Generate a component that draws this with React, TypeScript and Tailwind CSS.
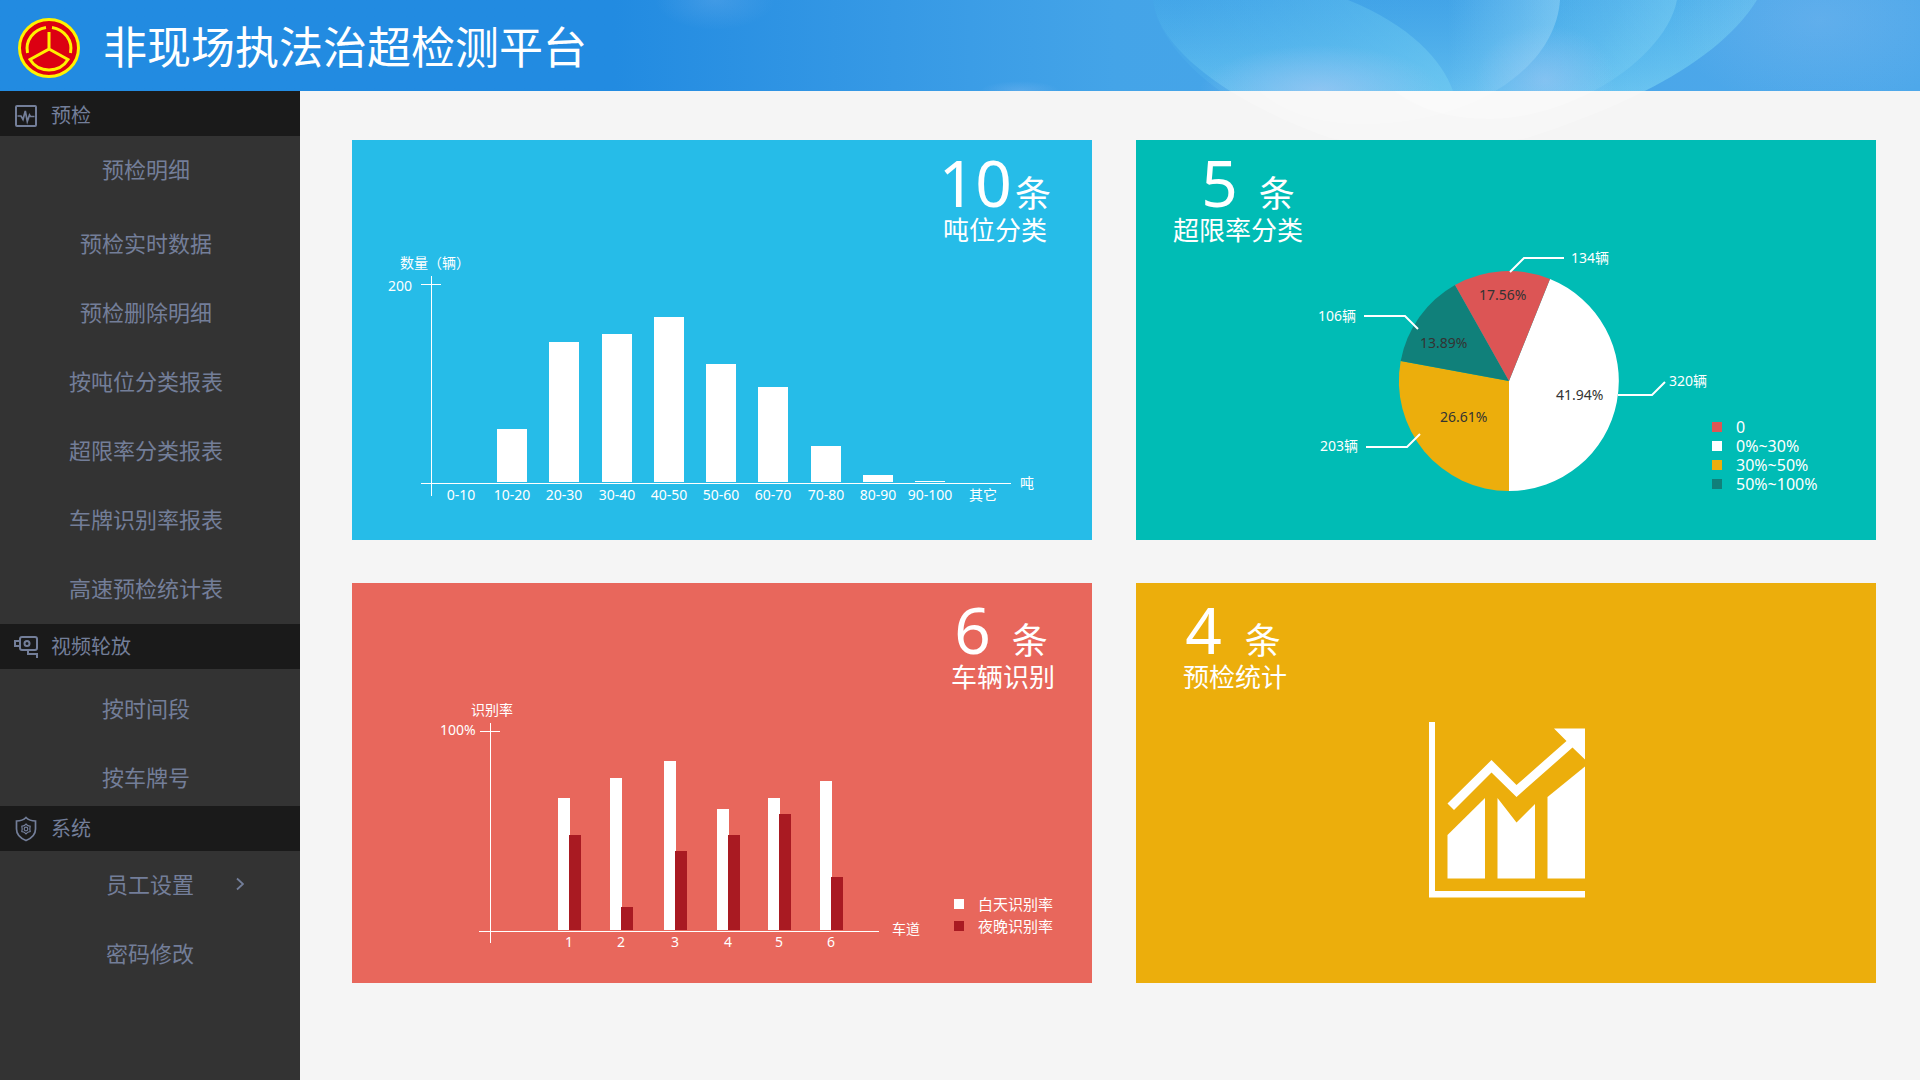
import React from "react";

const INK = "#ffffff";

function Emblem() {
  return (
    <svg viewBox="0 0 62 60" className="h-[60px] w-[62px] shrink-0" fill="none" aria-hidden="true">
      <ellipse cx="31" cy="30" rx="29.5" ry="28.5" fill="#dc0012" stroke="#fff200" strokeWidth="3" />
      <g stroke="#fff200" strokeWidth="3">
        <path d="M9.5 35 A22.5 21.5 0 0 1 28 9.5" />
        <path d="M34 9.5 A22.5 21.5 0 0 1 52.5 35" />
        <path d="M31 14 V31 L12 41.500 A22 21 0 0 0 50 41.500 L31 31" />
      </g>
    </svg>
  );
}

function PulseIcon() {
  return (
    <svg viewBox="0 0 24 24" className="h-6 w-6" fill="none" stroke="currentColor" strokeWidth="2" aria-hidden="true">
      <rect x="2" y="2" width="20" height="20" rx="1" />
      <path d="M3.500 12 H7 L9 15.500 L11.300 7 L13.300 17.500 L15.500 11 L16.500 12.500 H20.500" strokeWidth="1.700" />
    </svg>
  );
}

function CameraIcon() {
  return (
    <svg viewBox="0 0 26 24" className="h-6 w-[26px]" fill="none" stroke="currentColor" strokeWidth="2" aria-hidden="true">
      <rect x="7" y="2" width="17" height="13" rx="2" />
      <path d="M7 6 H2 V11 H7" />
      <circle cx="14" cy="8.500" r="2.500" />
      <path d="M15 15 V19 H24 V23" />
    </svg>
  );
}

function ShieldIcon() {
  return (
    <svg viewBox="0 0 24 26" className="h-[26px] w-6" fill="none" stroke="currentColor" strokeWidth="1.700" aria-hidden="true">
      <path d="M12 1.500 C9.500 4 5.500 5 2.500 5 V13 C2.500 18.500 7 22.500 12 24.500 C17 22.500 21.500 18.500 21.500 13 V5 C18.500 5 14.500 4 12 1.500 Z" />
      <path d="M12 8 L13.800 9.600 L16.200 10.200 L15.800 13 L16.200 15.500 L13.800 16.200 L12 18 L10.200 16.200 L7.800 15.500 L8.200 13 L7.800 10.200 L10.200 9.600 Z" strokeWidth="1.200" />
      <circle cx="12" cy="13" r="1.800" strokeWidth="1.200" />
    </svg>
  );
}

const OUTER = "M533 0 C537 40 590 95 710 138 C770 150 850 150 907 138 C1010 105 1100 60 1137 0 Z";
const INNER_LEFT = "M596 0 C600 50 630 124 743 124 C850 124 935 70 940 0 Z";
const INNER_RIGHT = "M728 0 C735 60 770 119 870 119 C950 119 1045 60 1057 0 Z";

function SkyArt() {
  return (
    <svg
      viewBox="0 0 1300 145"
      preserveAspectRatio="xMaxYMin slice"
      className="pointer-events-none absolute top-0 right-0 h-[145px] w-[1300px]"
      aria-hidden="true"
    >
      <defs>
        <linearGradient id="fall" gradientUnits="userSpaceOnUse" x1="0" y1="0" x2="0" y2="91">
          <stop offset="0" stopColor="#6fd2f4" stopOpacity="0.03" />
          <stop offset="1" stopColor="#8fe0f8" stopOpacity="0.4" />
        </linearGradient>
        <linearGradient id="deep" gradientUnits="userSpaceOnUse" x1="820" y1="0" x2="1050" y2="0">
          <stop offset="0" stopColor="#3a9fe6" stopOpacity="0.5" />
          <stop offset="1" stopColor="#3fb4ea" stopOpacity="0.25" />
        </linearGradient>
        <linearGradient id="petal" gradientUnits="userSpaceOnUse" x1="560" y1="0" x2="830" y2="60">
          <stop offset="0" stopColor="#5fc4f0" stopOpacity="0.1" />
          <stop offset="1" stopColor="#74cff2" stopOpacity="0.5" />
        </linearGradient>
        <linearGradient id="rim" gradientUnits="userSpaceOnUse" x1="1000" y1="0" x2="1130" y2="60">
          <stop offset="0" stopColor="#7fd4f4" stopOpacity="0" />
          <stop offset="1" stopColor="#7fd4f4" stopOpacity="0.4" />
        </linearGradient>
        <linearGradient id="edge" gradientUnits="userSpaceOnUse" x1="780" y1="0" x2="940" y2="0">
          <stop offset="0.3" stopColor="#a5dcf8" stopOpacity="0" />
          <stop offset="1" stopColor="#a5dcf8" stopOpacity="0.45" />
        </linearGradient>
        <linearGradient id="edge2" gradientUnits="userSpaceOnUse" x1="900" y1="0" x2="1060" y2="0">
          <stop offset="0" stopColor="#8fdcf6" stopOpacity="0" />
          <stop offset="1" stopColor="#8fdcf6" stopOpacity="0.35" />
        </linearGradient>
        <radialGradient id="cloud">
          <stop offset="0" stopColor="#a9c8f4" stopOpacity="0.6" />
          <stop offset="1" stopColor="#a9c8f4" stopOpacity="0" />
        </radialGradient>
        <clipPath id="bar">
          <rect width="1300" height="91" />
        </clipPath>
        <clipPath id="below">
          <rect y="91" width="1300" height="54" />
        </clipPath>
      </defs>
      <g clipPath="url(#bar)">
        <path d={OUTER} fill="url(#deep)" />
        <path d={OUTER} fill="url(#fall)" />
        <path d={OUTER} fill="url(#rim)" />
        <path d={INNER_RIGHT} fill="url(#edge2)" />
        <ellipse cx="925" cy="80" rx="70" ry="55" fill="url(#cloud)" opacity="0.8" />
        <path d={INNER_LEFT} fill="url(#edge)" />
        <path d="M533 0 C537 30 560 62 600 91 H833 C822 60 790 25 728 0 Z" fill="url(#petal)" />
        <ellipse cx="700" cy="90" rx="120" ry="45" fill="url(#cloud)" />
        <ellipse cx="1200" cy="20" rx="150" ry="90" fill="url(#cloud)" opacity="0.35" />
        <ellipse cx="95" cy="0" rx="60" ry="30" fill="url(#cloud)" opacity="0.3" />
        <ellipse cx="400" cy="91" rx="40" ry="10" fill="url(#cloud)" opacity="0.4" />
      </g>
      <g clipPath="url(#below)" fill="#ffffff">
        <path d={OUTER} opacity="0.25" />
        <path d={INNER_LEFT} opacity="0.2" />
        <path d={INNER_RIGHT} opacity="0.25" />
      </g>
    </svg>
  );
}

type Section = {
  title: string;
  icon: React.ReactNode;
  head: string;
  body: string;
  items: { label: string; className: string; more?: boolean }[];
};

const sections: Section[] = [
  {
    title: "预检",
    icon: <PulseIcon />,
    head: "pt-1",
    body: "pt-[5px] pb-2",
    items: [
      { label: "预检明细", className: "mb-[5px] pr-2" },
      { label: "预检实时数据", className: "pr-2" },
      { label: "预检删除明细", className: "pr-2" },
      { label: "按吨位分类报表", className: "pr-2" },
      { label: "超限率分类报表", className: "pr-2" },
      { label: "车牌识别率报表", className: "pr-2" },
      { label: "高速预检统计表", className: "pr-2" },
    ],
  },
  {
    title: "视频轮放",
    icon: <CameraIcon />,
    head: "",
    body: "pt-[11px] pb-px",
    items: [
      { label: "按时间段", className: "pr-2" },
      { label: "按车牌号", className: "pr-2" },
    ],
  },
  {
    title: "系统",
    icon: <ShieldIcon />,
    head: "",
    body: "pt-[5px]",
    items: [
      { label: "员工设置", className: "", more: true },
      { label: "密码修改", className: "" },
    ],
  },
];

function Sidebar() {
  return (
    <nav className="w-[300px] shrink-0 bg-[#333333] text-[#737e99]">
      {sections.map((s) => (
        <section key={s.title}>
          <h2 className={"flex h-[45px] items-center bg-[#1a1a1a] pl-[13px] text-xl " + s.head}>
            <span className="mr-3 flex w-[26px] justify-center">{s.icon}</span>
            {s.title}
          </h2>
          <ul className={"flex flex-col gap-[13px] " + s.body}>
            {s.items.map((it) => (
              <li key={it.label} className={it.className}>
                <a href="#" className="relative flex h-14 items-center justify-center text-[22px]">
                  {it.label}
                  {it.more && (
                    <svg viewBox="0 0 8 14" className="absolute right-14 h-[14px] w-2" fill="none" stroke="currentColor" strokeWidth="1.800" aria-hidden="true">
                      <path d="M1 1.500 L7 7 L1 12.500" />
                    </svg>
                  )}
                </a>
              </li>
            ))}
          </ul>
        </section>
      ))}
    </nav>
  );
}

function CardHead({ count, title, className, rowClass }: { count: number; title: string; className: string; rowClass: string }) {
  return (
    <div className={"flex h-[100px] " + className}>
      <div className="flex flex-col items-center">
        <p className={"flex h-16 items-baseline leading-none " + rowClass}>
          <span className="text-[64px]">{count}</span>
          <span className="text-4xl leading-none">条</span>
        </p>
        <h3 className="mt-[2px] text-[26px] leading-none">{title}</h3>
      </div>
    </div>
  );
}

const tonnage = [
  { label: "0-10", h: 0 },
  { label: "10-20", h: 53 },
  { label: "20-30", h: 140 },
  { label: "30-40", h: 148 },
  { label: "40-50", h: 165 },
  { label: "50-60", h: 118 },
  { label: "60-70", h: 95 },
  { label: "70-80", h: 36 },
  { label: "80-90", h: 7 },
  { label: "90-100", h: 1 },
  { label: "其它", h: 0 },
];
const tonnageX = [109, 160, 212, 265, 317, 369, 421, 474, 526, 578, 631];

function TonnageChart() {
  return (
    <svg viewBox="0 -10 740 300" className="h-[300px] w-full" fill={INK} fontSize="14" role="img" aria-label="吨位分类">
      <g shapeRendering="crispEdges">
        <rect x="79" y="26" width="1" height="220" />
        <rect x="69" y="34" width="20" height="1" />
        <rect x="69" y="233" width="590" height="1" />
        {tonnage.map((t, i) => (
          <rect key={t.label} x={tonnageX[i] - 15} y={232 - t.h} width="30" height={t.h} />
        ))}
      </g>
      <text x="48" y="18" lang="zh-TW" className="font-['Noto_Sans_CJK_TC',sans-serif]">数量（辆）</text>
      <text x="36" y="41">200</text>
      <text x="668" y="238">吨</text>
      {tonnage.map((t, i) => (
        <text key={t.label} x={tonnageX[i]} y="250" textAnchor="middle">{t.label}</text>
      ))}
    </svg>
  );
}

const lanes = [
  { x: 206, day: 132, night: 95 },
  { x: 258, day: 152, night: 23 },
  { x: 312, day: 169, night: 79 },
  { x: 365, day: 121, night: 95 },
  { x: 416, day: 132, night: 116 },
  { x: 468, day: 149, night: 53 },
];

function LaneChart() {
  return (
    <svg viewBox="0 -10 590 300" className="h-[300px] w-[590px]" fill={INK} fontSize="14" role="img" aria-label="车辆识别">
      <g shapeRendering="crispEdges">
        <rect x="138" y="30" width="1" height="220" />
        <rect x="128" y="38" width="20" height="1" />
        <rect x="127" y="238" width="400" height="1" />
        {lanes.map((l) => (
          <g key={l.x}>
            <rect x={l.x} y={237 - l.day} width="12" height={l.day} />
            <rect x={l.x + 11} y={237 - l.night} width="12" height={l.night} fill="#a91a22" />
          </g>
        ))}
      </g>
      <text x="119" y="22">识别率</text>
      <text x="88" y="42">100%</text>
      <text x="540" y="241">车道</text>
      {lanes.map((l, i) => (
        <text key={l.x} x={l.x + 11} y="254" textAnchor="middle">{i + 1}</text>
      ))}
    </svg>
  );
}

function PieChart() {
  return (
    <svg viewBox="0 -11 576 300" className="h-[300px] w-[576px]" fill={INK} fontSize="14" role="img" aria-label="超限率分类">
      <path d="M373 130 L414 28 A110 110 0 0 1 373 240 Z" fill="#ffffff" />
      <path d="M373 130 L373 240 A110 110 0 0 1 264.700 110 Z" fill="#ecae0c" />
      <path d="M373 130 L264.700 110 A110 110 0 0 1 319 34 Z" fill="#10807a" />
      <path d="M373 130 L319 34 A110 110 0 0 1 414 28 Z" fill="#dc5555" />
      <g fill="none" stroke={INK} strokeWidth="2">
        <path d="M374 21 L388 7 H428" />
        <path d="M228 65 H269 L282 78" />
        <path d="M230 196 H271 L284 183" />
        <path d="M482 144 H516 L529 131" />
      </g>
      <text x="435" y="12">134辆</text>
      <text x="182" y="70">106辆</text>
      <text x="184" y="200">203辆</text>
      <text x="533" y="135">320辆</text>
      <g fill="#333333">
        <text x="343" y="49">17.56%</text>
        <text x="284" y="97">13.89%</text>
        <text x="420" y="149">41.94%</text>
        <text x="304" y="171">26.61%</text>
      </g>
    </svg>
  );
}

function TrendArt() {
  return (
    <svg viewBox="0 -10 740 300" className="h-[300px] w-full" fill={INK} role="img" aria-label="预检统计">
      <path d="M293 29 H299 V198 H449 V204.500 H293 Z" />
      <path d="M311.500 142 L349 105 V185.500 H311.500 Z" />
      <path d="M361.500 105 L380.500 129.500 L399 111 V185.500 H361.500 Z" />
      <path d="M411.500 104 L449 73.500 V185.500 H411.500 Z" />
      <path d="M311.500 110.500 L355.500 67 L380.500 92 L430.500 48 L418 35.500 H449 V66.500 L436.500 54.500 L380.500 104 L355.500 79.500 L318 117 Z" />
    </svg>
  );
}

const overrun = [
  { label: "0", color: "bg-[#dc5555]" },
  { label: "0%~30%", color: "bg-white" },
  { label: "30%~50%", color: "bg-[#ecae0c]" },
  { label: "50%~100%", color: "bg-[#10807a]" },
];
const periods = [
  { label: "白天识别率", color: "bg-white" },
  { label: "夜晚识别率", color: "bg-[#a91a22]" },
];

export default function App() {
  return (
    <div className="flex min-h-screen flex-col bg-[#f5f5f5] font-['Noto_Sans','Noto_Sans_CJK_SC',sans-serif]">
      <header className="relative flex h-[91px] items-center bg-linear-to-r from-[#228be1] from-32% via-[#44a4e8] via-58% to-[#4ea8ea] pt-1 pl-[18px]">
        <SkyArt />
        <Emblem />
        <h1 className="mb-[2px] ml-[23px] text-[44px] leading-none text-white">非现场执法治超检测平台</h1>
      </header>
      <div className="flex grow">
        <Sidebar />
        <main className="relative grid grow auto-rows-min grid-cols-2 gap-x-11 gap-y-[43px] pt-[49px] pr-11 pb-[97px] pl-[52px] text-white">
          <section className="min-h-[400px] bg-[#26bce8]">
            <CardHead count={10} title="吨位分类" className="justify-end pt-[11px] pr-[41px]" rowClass="gap-[3px]" />
            <TonnageChart />
          </section>
          <section className="min-h-[400px] bg-[#00bcb5]">
            <CardHead count={5} title="超限率分类" className="pt-[11px] pl-[37px]" rowClass="gap-[21px] pl-5" />
            <div className="flex items-end">
              <PieChart />
              <ul className="mb-[47px]">
                {overrun.map((o) => (
                  <li key={o.label} className="flex h-[19px] items-center text-base leading-none">
                    <span className={"mr-[14px] size-[10px] " + o.color} />
                    {o.label}
                  </li>
                ))}
              </ul>
            </div>
          </section>
          <section className="min-h-[400px] bg-[#e8675c]">
            <CardHead count={6} title="车辆识别" className="justify-end pt-[15px] pr-[37px]" rowClass="gap-[21px] pr-1" />
            <div className="flex items-end">
              <LaneChart />
              <ul className="mb-[46px] ml-3">
                {periods.map((p) => (
                  <li key={p.label} className="flex h-[22px] items-center text-[15px] leading-none">
                    <span className={"mr-[14px] size-[10px] " + p.color} />
                    {p.label}
                  </li>
                ))}
              </ul>
            </div>
          </section>
          <section className="min-h-[400px] bg-[#ecae0c]">
            <CardHead count={4} title="预检统计" className="pt-[15px] pl-[47px]" rowClass="gap-[23px] pr-1" />
            <TrendArt />
          </section>
        </main>
      </div>
    </div>
  );
}
